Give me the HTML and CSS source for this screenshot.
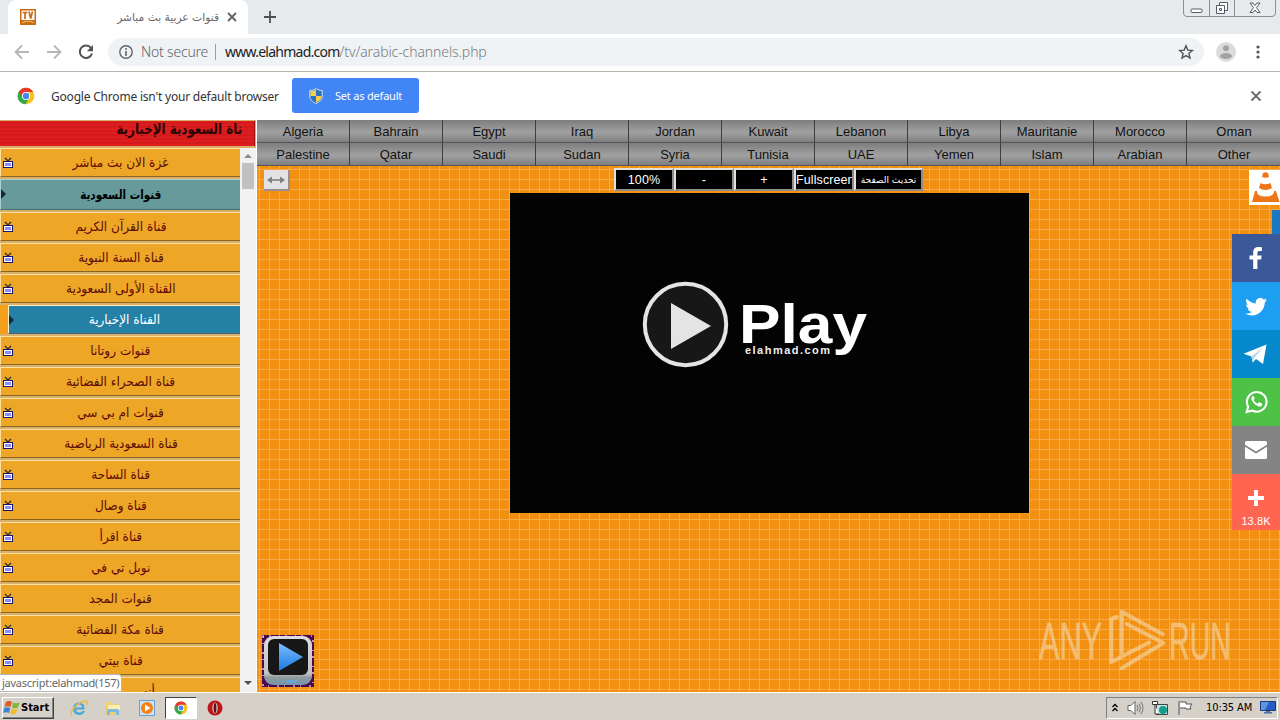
FILE: index.html
```html
<!DOCTYPE html>
<html lang="en">
<head>
    <meta charset="UTF-8">
    <meta name="viewport" content="width=device-width, initial-scale=1.0">
    <title>قنوات عربية بث مباشر</title>
    <link rel="stylesheet" href="styles.css">
</head>
<body>
    <!-- Shared icons -->
    <svg width="0" height="0" class="defs">
        <symbol id="tv" viewBox="0 0 12 12">
            <path d="M3 1l3 3 3-3" fill="none" stroke="#222" stroke-width="1.100"/>
            <rect x="1.500" y="4.500" width="9" height="6" fill="#fff" stroke="#15156a"/>
            <rect x="3" y="6" width="6" height="3" fill="#8c8cff"/>
        </symbol>
        <symbol id="chrome" viewBox="0 0 18 18">
            <circle cx="9" cy="9" r="8.300" fill="#fbc116"/>
            <path d="M9 9 1.800 4.700A8.300 8.300 0 0 0 8.500 17.300L12.400 11z" fill="#2da94f"/>
            <path d="M1.800 4.700A8.300 8.300 0 0 1 16.200 4.900H9L5.400 11z" fill="#e33b2e"/>
            <circle cx="9" cy="9" r="4.100" fill="#fff"/>
            <circle cx="9" cy="9" r="3.200" fill="#4587ee"/>
        </symbol>
    </svg>

    <!-- Browser tabs -->
    <div class="tab-strip">
        <div class="tab">
            <svg width="16" height="16" viewBox="0 0 16 16"><rect width="16" height="16" fill="#c96b10"/><path d="M1.500 1.500h13v9.500h-13z" fill="#fff"/><path d="M2.500 3.500h5M5 3.500v6.500M9 2.500l1.700 7 1.800-7" stroke="#c96b10" stroke-width="1.700" fill="none"/><path d="M2 13.500h2v-1h8v1h2" stroke="#f0b060" fill="none"/></svg>
            <span class="tab-title" dir="rtl">قنوات عربية بث مباشر</span>
            <svg width="10" height="10" viewBox="0 0 10 10"><path d="M1 1l8 8M9 1L1 9" stroke="#5f6368" stroke-width="1.800"/></svg>
        </div>
        <svg class="new-tab" width="12" height="12" viewBox="0 0 12 12"><path d="M6 0v12M0 6h12" stroke="#4c5054" stroke-width="1.800"/></svg>
        <div class="window-buttons">
            <span class="win-btn"><svg width="13" height="17" viewBox="0 0 13 17"><rect x="1" y="9" width="11" height="3.500" rx="1" fill="#fff" stroke="#555a66"/></svg></span>
            <span class="win-btn"><svg width="14" height="17" viewBox="0 0 14 17"><path d="M4.500 2.500h8v8h-8z" fill="#fff" stroke="#555a66"/><path d="M1.500 5.500h8v8h-8z" fill="#fff" stroke="#555a66"/><path d="M4.500 8.500h2v2h-2z" fill="none" stroke="#555a66"/></svg></span>
            <span class="win-btn wide"><svg width="12" height="17" viewBox="0 0 12 17"><path d="M1 3h3l2 2.500L8 3h3L7.500 7.700 11 12.500H8L6 10l-2 2.500H1l3.500-4.800z" fill="#fff" stroke="#555a66"/></svg></span>
        </div>
    </div>

    <!-- Address bar -->
    <div class="toolbar">
        <svg width="16" height="16" viewBox="0 0 16 16"><path d="M15 8H2M8 1.500L1.500 8 8 14.500" fill="none" stroke="#b4b6b9" stroke-width="1.800"/></svg>
        <svg width="16" height="16" viewBox="0 0 16 16"><path d="M1 8h13M8 1.500L14.500 8 8 14.500" fill="none" stroke="#b4b6b9" stroke-width="1.800"/></svg>
        <svg width="16" height="16" viewBox="0 0 16 16"><path d="M13 4A6.200 6.200 0 1 0 14 9.500" fill="none" stroke="#505357" stroke-width="2"/><path d="M15 1v6.200H8.800z" fill="#505357"/></svg>
        <div class="address">
            <svg width="14" height="14" viewBox="0 0 14 14"><circle cx="7" cy="7" r="6.200" fill="none" stroke="#5f6368" stroke-width="1.400"/><path d="M7 3v1.700M7 6v5" stroke="#5f6368" stroke-width="1.600"/></svg>
            <span class="not-secure">Not secure</span>
            <span class="divider"></span>
            <span class="url"><b>www.elahmad.com</b>/tv/arabic-channels.php</span>
            <svg class="star" width="16" height="16" viewBox="0 0 16 16"><path d="M8 1.800l1.800 4.300 4.600.4-3.500 3 1.100 4.500L8 11.600 4 14l1.100-4.500-3.500-3 4.600-.4z" fill="none" stroke="#505357" stroke-width="1.400"/></svg>
        </div>
        <svg class="avatar" width="20" height="20" viewBox="0 0 20 20"><circle cx="10" cy="10" r="10" fill="#dcdcdc"/><circle cx="10" cy="6.200" r="3" fill="#a2a2a2"/><ellipse cx="10" cy="14" rx="6" ry="3" fill="#a2a2a2"/></svg>
        <svg class="dots" width="4" height="14" viewBox="0 0 4 14"><circle cx="2" cy="2" r="1.600" fill="#505357"/><circle cx="2" cy="7" r="1.600" fill="#505357"/><circle cx="2" cy="12" r="1.600" fill="#505357"/></svg>
    </div>

    <div class="infobar">
        <svg width="18" height="18"><use href="#chrome"/></svg>
        <span class="infobar-text">Google Chrome isn't your default browser</span>
        <button class="default-btn">
            <svg width="14" height="16" viewBox="0 0 14 16"><path d="M7 .500C5 2 3 2.500.8 2.500V8c0 4 3 6 6.200 7.500C10.200 14 13.200 12 13.200 8V2.500C11 2.500 9 2 7 .500z" fill="#2d6fc4" stroke="#d9e3ee"/><path d="M7 1.500V8H1.500V3.300C3.800 3.200 5.500 2.500 7 1.500zM7 8h5.500c0 3.500-2.500 5.200-5.500 6.600z" fill="#f7d04a"/></svg>
            <span>Set as default</span>
        </button>
        <svg class="infobar-close" width="10" height="10" viewBox="0 0 10 10"><path d="M.500.500l9 9M9.500.500l-9 9" stroke="#5f6368" stroke-width="1.900"/></svg>
    </div>

    <div class="page">
        <div class="sidebar">
            <div class="ticker" dir="rtl"><span>ناة السعودية الإخبارية</span></div>
            <div class="list-wrap">
                <div class="channels">
                    <a class="channel"><svg class="tv"><use href="#tv"/></svg><span>غزة الان بث مباشر</span></a>
                    <a class="channel group"><i class="arrow"></i><span>قنوات السعودية</span></a>
                    <a class="channel"><svg class="tv"><use href="#tv"/></svg><span>قناة القرآن الكريم</span></a>
                    <a class="channel"><svg class="tv"><use href="#tv"/></svg><span>قناة السنة النبوية</span></a>
                    <a class="channel"><svg class="tv"><use href="#tv"/></svg><span>القناة الأولى السعودية</span></a>
                    <a class="channel active"><i class="arrow"></i><span>القناة الإخبارية</span></a>
                    <a class="channel"><svg class="tv"><use href="#tv"/></svg><span>قنوات روتانا</span></a>
                    <a class="channel"><svg class="tv"><use href="#tv"/></svg><span>قناة الصحراء الفضائية</span></a>
                    <a class="channel"><svg class="tv"><use href="#tv"/></svg><span>قنوات ام بي سي</span></a>
                    <a class="channel"><svg class="tv"><use href="#tv"/></svg><span>قناة السعودية الرياضية</span></a>
                    <a class="channel"><svg class="tv"><use href="#tv"/></svg><span>قناة الساحة</span></a>
                    <a class="channel"><svg class="tv"><use href="#tv"/></svg><span>قناة وصال</span></a>
                    <a class="channel"><svg class="tv"><use href="#tv"/></svg><span>قناة اقرأ</span></a>
                    <a class="channel"><svg class="tv"><use href="#tv"/></svg><span>نوبل تي في</span></a>
                    <a class="channel"><svg class="tv"><use href="#tv"/></svg><span>قنوات المجد</span></a>
                    <a class="channel"><svg class="tv"><use href="#tv"/></svg><span>قناة مكة الفضائية</span></a>
                    <a class="channel"><svg class="tv"><use href="#tv"/></svg><span>قناة بيتي</span></a>
                    <a class="channel last"><span>أنس بن سعيد</span></a>
                </div>
                <div class="scrollbar">
                    <i class="up"></i>
                    <i class="thumb"></i>
                    <i class="down"></i>
                </div>
            </div>
            <div class="status">javascript:elahmad(157)</div>
        </div>

        <div class="main">
            <div class="countries">
                <a>Algeria</a><a>Bahrain</a><a>Egypt</a><a>Iraq</a><a>Jordan</a><a>Kuwait</a><a>Lebanon</a><a>Libya</a><a>Mauritanie</a><a>Morocco</a><a>Oman</a>
                <a>Palestine</a><a>Qatar</a><a>Saudi</a><a>Sudan</a><a>Syria</a><a>Tunisia</a><a>UAE</a><a>Yemen</a><a>Islam</a><a>Arabian</a><a>Other</a>
            </div>
            <div class="controls">
                <span class="resize"><svg width="20" height="10" viewBox="0 0 20 10"><path d="M3 5h14" stroke="#808080" stroke-width="1.600"/><path d="M1 5l5-3.500v7zM19 5l-5-3.500v7z" fill="#808080"/></svg></span>
                <div class="control-buttons">
                    <button>100%</button>
                    <button>-</button>
                    <button>+</button>
                    <button>Fullscreen</button>
                    <button class="refresh">تحديث الصفحة</button>
                </div>
            </div>
            <div class="player">
                <svg width="519" height="320" viewBox="0 0 519 320">
                    <circle cx="175.500" cy="131.500" r="40.700" fill="#171717" stroke="#e4e4e4" stroke-width="4"/>
                    <path d="M161 110v46l40-23z" fill="#e4e4e4"/>
                    <text class="play-word" x="229" y="150" textLength="128" lengthAdjust="spacingAndGlyphs">Play</text>
                    <text class="play-site" x="235" y="161" textLength="85" lengthAdjust="spacing">elahmad.com</text>
                </svg>
            </div>

            <svg class="vlc" width="31" height="35" viewBox="0 0 31 35"><path d="M0 0h31v35H0z" fill="#fff"/><path d="M14 3q2.500-1.500 5 0l1 4q-3.500 1.500-7 0zM11.500 13q4.500 2.500 10 0l1.500 5q-6.500 4-13 0zM6 21h2q-.5 5.500 8.500 5.500T25 21h2l3.500 11H3z" fill="#ee7518"/></svg>
            <span class="blue-strip"></span>

            <div class="share">
                <a class="facebook"><svg width="32" height="32" viewBox="0 0 32 32"><path d="M13.200 27V17.500H9.500v-4h3.700v-3C13.200 6.800 15.200 5 18.500 5c1.600 0 2.900.1 3.400.2v3.700h-2.200c-1.800 0-2.300.8-2.300 2v2.600h4.300l-.6 4h-3.700V27z"/></svg></a>
                <a class="twitter"><svg width="32" height="32" viewBox="0 0 32 32"><path transform="translate(0 1.500)" d="M27 8.600c-.8.400-1.700.6-2.500.7.900-.6 1.600-1.400 1.900-2.400-.9.500-1.800.8-2.800 1a4.500 4.500 0 0 0-7.700 4.100c-3.700-.2-7-2-9.200-4.700-1.200 2.100-.6 4.700 1.400 6-.7 0-1.400-.2-2-.6 0 2.300 1.500 4.100 3.600 4.500-.6.200-1.300.2-2 .1.600 1.800 2.200 3.100 4.200 3.100A9 9 0 0 1 5.200 22c8.600 5.300 19.600-.7 19.600-11.200.9-.6 1.600-1.300 2.200-2.200z"/></svg></a>
                <a class="telegram"><svg width="32" height="32" viewBox="0 0 32 32"><path d="M3.500 15.800 26.500 6.500 23 26l-7-5-3.300 3.500-1.200-6z"/><path d="M11.500 18.500 23 9.500 14.500 19.500l-1.800 5z" fill="#b4d8ee"/></svg></a>
                <a class="whatsapp"><svg width="32" height="32" viewBox="0 0 32 32"><path d="M6.700 26l1.500-5.300a9.800 9.800 0 1 1 3.900 3.800z" fill="none" stroke="#fff" stroke-width="2.100"/><path d="M12.400 10.300c-2.300 1.500-.6 5 2.200 7.600 2.900 2.700 6.600 3.600 7.500 1 .5-1.400-.2-1.700-2.500-2.700-.9-.3-1.200 1-1.900 1.300-1.200-.1-3.700-2.400-4-3.600.3-.6 1-.9 1-1.600-.8-2.200-1.200-2.600-2.300-2z"/></svg></a>
                <a class="email"><svg width="32" height="32" viewBox="0 0 32 32"><path d="M6.500 7h19q1.500 0 1.500 1.500v2.300l-11 6.700-11-6.700V8.500Q5 7 6.500 7z"/><path d="M5 12.800l11 6.700 11-6.700v10.700q0 1.500-1.500 1.500h-19Q5 25 5 23.500z"/></svg></a>
                <a class="more"><svg width="32" height="32" viewBox="0 0 32 32"><path d="M14 8h4v6h6v4h-6v6h-4v-6H8v-4h6z"/></svg><span>13.8K</span></a>
            </div>

            <svg class="play-badge" width="52" height="52" viewBox="0 0 52 52">
                <defs>
                    <linearGradient id="rim" x1="0" y1="0" x2="0" y2="1"><stop offset="0" stop-color="#ddd"/><stop offset=".75" stop-color="#c4c4c4"/><stop offset=".85" stop-color="#8f9a9e"/><stop offset="1" stop-color="#7496ad"/></linearGradient>
                    <linearGradient id="tri" x1="0" y1="0" x2="0" y2="1"><stop offset="0" stop-color="#7cbcff"/><stop offset="1" stop-color="#187be0"/></linearGradient>
                </defs>
                <path d="M0 0h52v52H0z" fill="#4b0850"/>
                <path d="M1 1h50v50H1z" fill="none" stroke="#fff" stroke-width="1.200" stroke-dasharray="1 5 2 8"/>
                <rect x="2" y="1" width="48" height="49" rx="9" fill="url(#rim)"/>
                <rect x="6" y="4" width="40" height="36" rx="6" fill="#171717"/>
                <path d="M17 8v28l24-14z" fill="url(#tri)"/>
                <path d="M24 45h11l-1 3h-9z" fill="#6aa5d4"/>
            </svg>

            <svg class="watermark" width="200" height="66" viewBox="0 0 200 66">
                <text x="0" y="51" textLength="63" lengthAdjust="spacingAndGlyphs">ANY</text>
                <text x="130" y="51" textLength="62" lengthAdjust="spacingAndGlyphs">RUN</text>
                <path d="M77.700 9l-5.400 2v43L110 34.500M82.700 45V3.700l41 22.500M87.700 16l36.600 19-41.600 25.300"/>
            </svg>
        </div>
    </div>

    <!-- Windows taskbar -->
    <div class="taskbar">
        <div class="start">
            <svg width="17" height="17" viewBox="0 0 17 17"><path d="M3 3c2-1.500 4-1 6 0L7.500 8c-2-1-4-1-6 0z" fill="#e25b27"/><path d="M10 3.500c2 1 4 1 6.500 0L15 8.500c-2 1-4 1-6 0z" fill="#7fb93c"/><path d="M1.200 9c2-1 4-1 6 0L6 14c-2-1-4-1-6 0z" fill="#3b83d0"/><path d="M8.500 9.500c2 1 4 1 6 0L13 14.500c-2 1-4 1-6 0z" fill="#f3bb2c"/></svg>
            <b>Start</b>
        </div>
        <div class="quick">
            <span><svg width="18" height="18" viewBox="0 0 18 18"><path d="M14.500 10.500H6q.5 3 3.500 3 2 0 3-1.500h2.500q-1.500 4-6 4-6 0-6-6.500 0-6 6-6t5.500 7zM6 8.500h6q-.5-3-3-3t-3 3z" fill="#48a9dc"/><path d="M2 16.500C-1 14 6 3 16 2c2 0 1 3 0 4" fill="none" stroke="#e7bb45" stroke-width="1.400"/></svg></span>
            <span><svg width="18" height="18" viewBox="0 0 18 18"><path d="M2 3h5l1 2h8v11H2z" fill="#ecd277"/><path d="M4 6h12v5H4z" fill="#f9edb0"/><path d="M3 16v-4q0-2 2-2h8q2 0 2 2v4h-3v-3H6v3z" fill="#7fb9df"/></svg></span>
            <span><svg width="18" height="18" viewBox="0 0 18 18"><path d="M1.500 1.500h15v15h-15z" fill="#cfe2f3" stroke="#699fd1"/><circle cx="9" cy="9" r="6" fill="#f08218"/><path d="M7 5.500v7L12.500 9z" fill="#fff"/></svg></span>
            <span class="running"><svg width="14" height="14"><use href="#chrome" width="14" height="14"/></svg></span>
            <span><svg width="18" height="18" viewBox="0 0 18 18"><circle cx="9" cy="9" r="7.500" fill="#bb1519"/><ellipse cx="9" cy="9" rx="2.700" ry="5.500" fill="#d7c8c6"/><ellipse cx="9" cy="9" rx="1.400" ry="5" fill="#661012"/></svg></span>
        </div>
        <div class="tray">
            <svg width="8" height="10" viewBox="0 0 8 10"><path d="M1.500 4L4 1.500 6.500 4M1.500 8L4 5.500 6.500 8" fill="none" stroke="#000" stroke-width="1.300"/></svg>
            <svg width="17" height="16" viewBox="0 0 17 16"><path d="M1 5.500h3l4-4v13l-4-4H1z" fill="#fff" stroke="#666"/><path d="M10 5q2 3 0 6M12 3.500q3 4.500 0 9M14 2q4 6 0 12" fill="none" stroke="#777"/></svg>
            <svg width="17" height="16" viewBox="0 0 17 16"><path d="M4.500 4.500h11v10h-11z" fill="#bce5e3" stroke="#444"/><path d="M.500 1.500h5v3h-5zM3 5v9h4" fill="#fff" stroke="#333"/><circle cx="11" cy="10" r="4" fill="#159c91"/></svg>
            <svg width="17" height="16" viewBox="0 0 17 16"><path d="M2 1v14M3 2h6v2h6l-2 3 1 2H9V8H3" fill="#fff" stroke="#555"/></svg>
            <span class="clock">10:35 AM</span>
            <svg width="16" height="13" viewBox="0 0 16 13"><path d="M.500.500h15v9H.500z" fill="#275ec3" stroke="#173c78"/><path d="M1 1h8L5 9H1z" fill="#5f95e4"/><path d="M6 10h4v1h2v1.500H4V11h2z" fill="#4971a5"/></svg>
        </div>
    </div>
</body>
</html>
```
FILE: styles.css
```css
:root {
    --chrome-grey: #e7eaed;
    --orange: #f29111;
    --row: #eea627;
    --taskbar: #d5d0c8;
    --ui-font: "DejaVu Sans Condensed", "Noto Sans", sans-serif;
    --arabic-font: "DejaVu Sans", sans-serif;
}

* {
    box-sizing: border-box;
    margin: 0;
    padding: 0;
}

body {
    width: 1280px;
    height: 720px;
    overflow: hidden;
    display: flex;
    flex-direction: column;
    font-family: "Liberation Sans", Arial, sans-serif;
    font-size: 13px;
    background: #fff;
}

svg {
    display: block;
    flex: none;
}

button {
    font-family: inherit;
}

.defs {
    position: absolute;
}

/* tabs */
.tab-strip {
    position: relative;
    display: flex;
    align-items: center;
    height: 34px;
    padding-left: 8px;
    background: var(--chrome-grey);
}

.tab {
    display: flex;
    align-items: center;
    width: 240px;
    height: 34px;
    padding: 0 11px 0 12px;
    background: #fff;
    border-radius: 8px 8px 0 0;
}

.tab-title {
    flex: 1;
    padding: 0 8px;
    font-family: var(--arabic-font);
    font-size: 10.700px;
    color: #666;
    white-space: nowrap;
}

.new-tab {
    margin-left: 16px;
}

.window-buttons {
    position: absolute;
    top: -1px;
    right: 4px;
    display: flex;
    height: 18px;
    border: 1px solid #8b9096;
    border-radius: 0 0 4px 4px;
}

.win-btn {
    display: flex;
    justify-content: center;
    width: 25px;
}

.win-btn + .win-btn {
    border-left: 1px solid #8b9096;
}

.win-btn.wide {
    width: 41px;
}

/* address bar */
.toolbar {
    display: flex;
    align-items: center;
    height: 38px;
    padding: 0 20px 2px 14px;
    border-bottom: 1px solid #b6b4b1;
}

.toolbar > svg + svg {
    margin-left: 16px;
}

.address {
    display: flex;
    align-items: center;
    flex: 1;
    height: 28px;
    margin-left: 14px;
    padding: 0 10px 0 11px;
    border-radius: 14px;
    background: #f0f3f5;
    font-family: "Noto Sans", sans-serif;
    font-size: 14px;
    font-weight: 300;
    color: #5f6368;
}

.not-secure {
    margin-left: 8px;
    width: 67px;
    letter-spacing: -0.2px;
    white-space: nowrap;
}

.divider {
    width: 1px;
    height: 16px;
    margin: 0 9px 0 7px;
    background: #9a9da1;
}

.url {
    flex: 1;
    color: #777b80;
    letter-spacing: -0.1px;
}

.url b {
    font-weight: 400;
    letter-spacing: -0.750px;
    color: #202124;
}

.avatar {
    margin-left: 12px;
}

.toolbar .dots {
    margin-left: 20px;
}

/* default browser bar */
.infobar {
    display: flex;
    align-items: center;
    height: 48px;
    padding: 0 19px 0 17px;
    font-family: "Noto Sans", sans-serif;
    color: #333;
}

.infobar-text {
    width: 228px;
    margin-left: 16px;
    font-size: 12px;
    letter-spacing: -0.200px;
    white-space: nowrap;
}

.default-btn {
    display: flex;
    align-items: center;
    gap: 12px;
    width: 127px;
    height: 35px;
    margin: -1px 0 0 13px;
    padding-left: 17px;
    border: none;
    border-radius: 3px;
    background: #4285f4;
    color: #fff;
    font-size: 11px;
    letter-spacing: -0.200px;
    white-space: nowrap;
}

.infobar-close {
    margin-left: auto;
}

/* page */
.page {
    display: flex;
    height: 572px;
}

.sidebar {
    position: relative;
    display: flex;
    flex-direction: column;
    width: 257px;
    height: 572px;
    border-right: 1px solid #fff;
    background: #d9b06a;
}

.ticker {
    height: 25px;
    margin: 1px 1px 2px 0;
    padding-right: 12px;
    border-right: 1px solid #a01010;
    background: repeating-linear-gradient(0deg, #de1e1e 0 2px, #d31a1c 2px 4px);
    font-family: var(--arabic-font);
    font-size: 15px;
    font-weight: bold;
    line-height: 17px;
    color: #2a0505;
    overflow: hidden;
    white-space: nowrap;
}

/* squeeze the wide arabic glyphs */
.ticker span {
    display: inline-block;
    transform: scaleX(0.79);
    transform-origin: right;
}

.list-wrap {
    display: flex;
    flex: 1;
    overflow: hidden;
}

.channels {
    display: flex;
    flex-direction: column;
    gap: 2px;
    width: 240px;
}

.channel {
    position: relative;
    display: flex;
    align-items: center;
    justify-content: center;
    flex: none;
    height: 29px;
    border-top: 1px solid #ffe0a0;
    border-left: 1px solid #ffe0a0;
    border-bottom: 1px solid #8a6420;
    background: var(--row);
    font-family: var(--arabic-font);
    font-size: 13px;
    color: #5d0b08;
    white-space: nowrap;
}

.channel span {
    transform: scaleX(0.93);
}

.channel .tv {
    position: absolute;
    left: 1px;
    top: 8px;
    width: 12px;
    height: 12px;
}

.channel.group {
    height: 31px;
    background: #669a9b;
    border-color: #a8d0d0;
    border-bottom-color: #46696a;
    color: #000;
    font-weight: bold;
}

.channel.group span {
    transform: scaleX(0.8);
}

.channel.active {
    margin-left: 8px;
    background: #2580a6;
    border-color: #fff0c8;
    border-bottom-color: #4a6474;
    box-shadow: -8px 0 #f5a01c;
    color: #fff;
}

.arrow {
    position: absolute;
    left: 0;
    top: 9px;
    border: 5px solid transparent;
    border-left-color: #122b33;
    border-right: none;
}

.scrollbar {
    display: flex;
    flex-direction: column;
    align-items: center;
    width: 16px;
    background: #f1f1f1;
}

.scrollbar .up {
    margin: 6px 0 5px;
    border: 4px solid transparent;
    border-top: none;
    border-bottom-color: #8d8d8d;
}

.scrollbar .thumb {
    width: 12px;
    height: 26px;
    background: #c1c1c1;
}

.scrollbar .down {
    margin: auto 0 7px;
    border: 4px solid transparent;
    border-bottom: none;
    border-top-color: #505050;
}

.status {
    position: absolute;
    left: 0;
    bottom: 0;
    width: 122px;
    height: 18px;
    padding-left: 2px;
    border: 1px solid #b5b5b5;
    border-left: none;
    border-radius: 0 4px 0 0;
    background: #fff;
    font-family: "Noto Sans", sans-serif;
    font-size: 11px;
    line-height: 16px;
    letter-spacing: -0.250px;
    color: #666;
    white-space: nowrap;
}

.main {
    position: relative;
    width: 1023px;
    background-color: var(--orange);
    background-image:
        linear-gradient(#f8aa4a 1px, transparent 1px),
        linear-gradient(90deg, #f8aa4a 1px, transparent 1px);
    background-size: 10px 10px;
    background-position: 2px 9px;
}

.countries {
    display: grid;
    grid-template-columns: repeat(11, 93px);
    grid-auto-rows: 23px;
}

.countries a {
    border-right: 1px solid #3f3e44;
    border-bottom: 1px solid #55545a;
    background: linear-gradient(#7d7d7d, #a1a1a1 55%, #7f7f7f);
    text-align: center;
    line-height: 23px;
    color: #111;
}

.countries a:nth-child(11n) {
    padding-left: 1px;
    border-right: none;
}

.controls {
    display: flex;
    height: 27px;
    padding: 2px 0 0 7px;
}

.resize {
    display: flex;
    align-items: center;
    justify-content: center;
    width: 26px;
    height: 21px;
    margin-top: 2px;
    border-right: 2px solid #9b8d92;
    border-bottom: 2px solid #9b8d92;
    background: #e3e3e6;
}

.control-buttons {
    display: flex;
    height: 23px;
    margin-left: 324px;
}

.control-buttons button {
    width: 60px;
    border: 2px outset #e3e0dc;
    background: #000;
    color: #fff;
    font-size: 12.500px;
    letter-spacing: 0.1px;
    white-space: nowrap;
    overflow: hidden;
}

.control-buttons .refresh {
    width: 69px;
    font-family: var(--arabic-font);
    font-size: 9px;
    letter-spacing: 0;
}

.player {
    width: 519px;
    height: 320px;
    margin-left: 253px;
    background: #030303;
}

.play-word {
    fill: #fff;
    font-size: 55px;
    font-weight: bold;
}

.play-site {
    fill: #eee;
    font-size: 11px;
    font-weight: bold;
}

.vlc {
    position: absolute;
    right: 0;
    top: 50px;
}

.blue-strip {
    position: absolute;
    right: 0;
    top: 90px;
    width: 8px;
    height: 24px;
    background: #1b78c4;
}

/* share buttons */
.share {
    position: absolute;
    right: 0;
    top: 114px;
    width: 48px;
}

.share a {
    display: flex;
    flex-direction: column;
    align-items: center;
    height: 48px;
    padding-top: 8px;
}

.share svg {
    fill: #fff;
}

.facebook { background: #3b5998; }
.twitter { background: #1d9ef0; }
.telegram { background: #0588cc; }
.whatsapp { background: #4dc247; }
.email { background: #848484; }

.share .more {
    height: 56px;
    background: #ff6550;
}

.share .more span {
    font-size: 11px;
    line-height: 15px;
    letter-spacing: 0.1px;
    color: #fff;
}

.play-badge {
    position: absolute;
    left: 5px;
    top: 515px;
}

.watermark {
    position: absolute;
    left: 782px;
    top: 488px;
    opacity: 0.55;
    fill: none;
    stroke: #f3e0c0;
    stroke-width: 4;
    stroke-linejoin: round;
    stroke-linecap: round;
}

.watermark text {
    fill: #f3e0c0;
    stroke: #f3e0c0;
    stroke-width: 0.6;
    font-size: 52px;
}

/* taskbar */
.taskbar {
    display: flex;
    align-items: center;
    height: 28px;
    padding: 2px 2px 0;
    border-top: 1px solid #fff;
    background: var(--taskbar);
    font-family: var(--ui-font);
    font-size: 11px;
}

.start {
    display: flex;
    align-items: center;
    gap: 1px;
    width: 52px;
    height: 22px;
    padding-left: 0;
    border: 1px solid #fff;
    border-right-color: #404040;
    border-bottom-color: #404040;
    box-shadow: inset -1px -1px #888;
}

.quick {
    display: flex;
    margin-left: 8px;
}

.quick span {
    display: flex;
    align-items: center;
    justify-content: center;
    width: 34px;
    height: 22px;
}

.quick .running {
    width: 32px;
    margin: 0 1px;
    border: 1px solid #404040;
    border-right-color: #fff;
    border-bottom-color: #fff;
    background: #fff;
}

.tray {
    display: flex;
    align-items: center;
    gap: 8px;
    width: 172px;
    height: 22px;
    margin-left: auto;
    padding-left: 4px;
    border: 1px solid #808080;
    border-right-color: #fff;
    border-bottom-color: #fff;
}

.clock {
    margin-left: 4px;
    letter-spacing: -0.1px;
    white-space: nowrap;
}
```
